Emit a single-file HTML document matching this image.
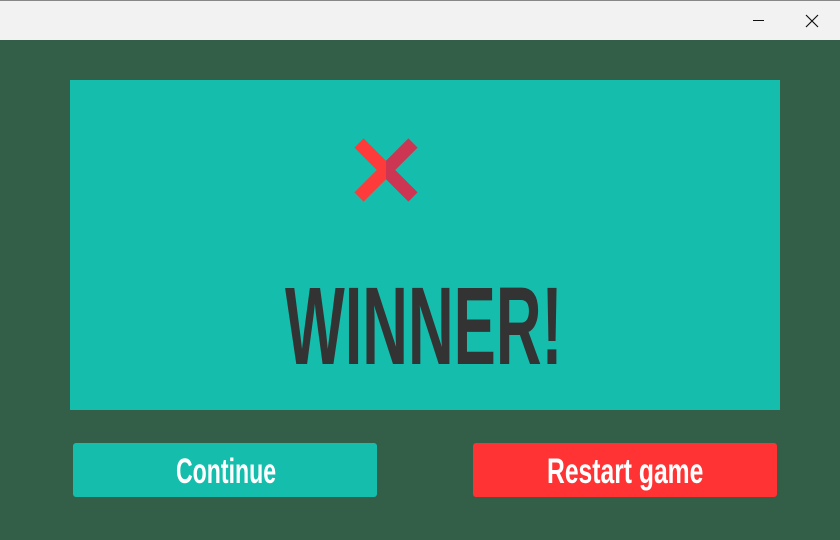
<!DOCTYPE html>
<html><head><style>
body{margin:0;width:840px;height:540px;background:#335e48;position:relative;overflow:hidden;font-family:"Liberation Sans",sans-serif}
.tb{position:absolute;left:0;top:0;width:840px;height:40px;background:#f2f2f2;border-top:1px solid #888;box-sizing:border-box}
.panel{position:absolute;left:70px;top:80px;width:710px;height:330px;background:#15bdac}
.t{position:absolute;white-space:nowrap;font-weight:bold;transform-origin:left top}
.btn{position:absolute;top:443px;width:304px;height:54px;border-radius:3px}
</style></head><body>
<div class="tb">
<div style="position:absolute;left:753px;top:19px;width:11px;height:1px;background:#111"></div>
<svg style="position:absolute;left:805px;top:13px" width="14" height="14"><path d="M1 1L13 13M13 1L1 13" stroke="#111" stroke-width="1.2"/></svg>
</div>
<div class="panel"></div>
<svg style="position:absolute;left:354px;top:138px" width="64" height="64">
<defs><clipPath id="l"><rect x="0" y="0" width="32" height="64"/></clipPath><clipPath id="r"><rect x="32" y="0" width="32" height="64"/></clipPath></defs>
<g clip-path="url(#l)"><path d="M5 5L59 59M59 5L5 59" stroke="#fe3b3b" stroke-width="13"/></g>
<g clip-path="url(#r)"><path d="M5 5L59 59M59 5L5 59" stroke="#cc3652" stroke-width="13"/></g>
</svg>
<div class="t" style="left:285px;top:272px;font-size:110px;line-height:110px;color:#333;transform:scaleX(0.575)">WINNER!</div>
<div class="btn" style="left:73px;background:#15bdac"></div>
<div class="btn" style="left:473px;background:#ff3333"></div>
<div class="t" style="left:176px;top:453px;font-size:35px;line-height:38px;color:#fff;transform:scaleX(0.66)">Continue</div>
<div class="t" style="left:547px;top:453px;font-size:35px;line-height:38px;color:#fff;transform:scaleX(0.705)">Restart game</div>
</body></html>
